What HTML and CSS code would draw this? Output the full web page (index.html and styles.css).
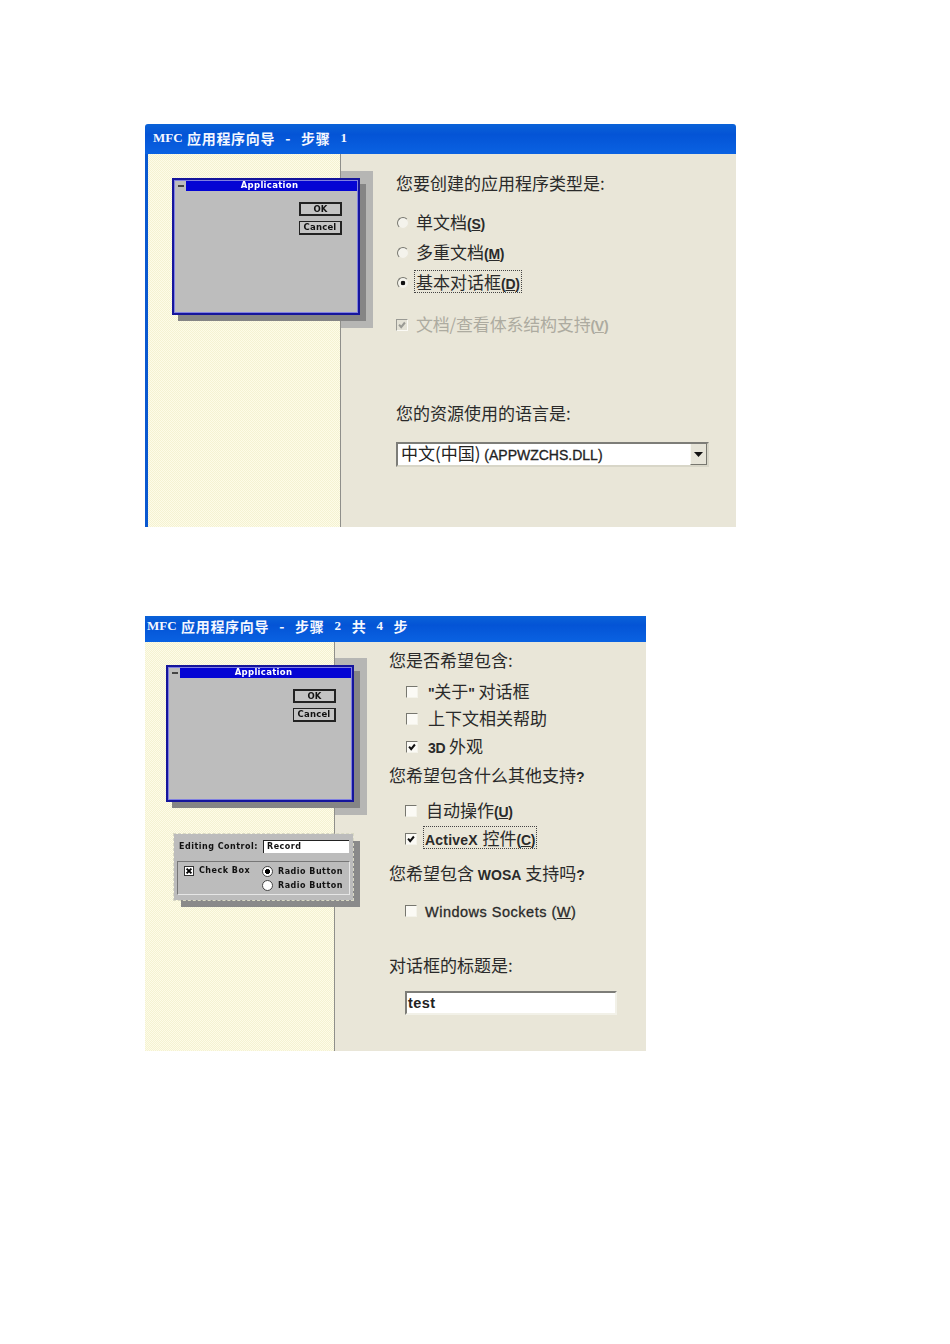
FILE: index.html
```html
<!DOCTYPE html>
<html lang="zh-CN">
<head>
<meta charset="utf-8">
<title>MFC 应用程序向导</title>
<link rel="stylesheet" href="styles.css">
</head>
<body>
<section class="wizard wizard-one">
  <header class="titlebar">
    <span class="mfc">MFC</span><span>应用程序向导</span><span>-</span><span>步骤</span><span class="num">1</span>
  </header>
  <div class="wizard-body">
    <aside class="art">
      <div class="preview">
        <div class="dialog">
          <div class="dialog-title"><i class="sysbox"></i><span>Application</span></div>
          <div class="dialog-buttons"><span class="btn btn-default">OK</span><span class="btn">Cancel</span></div>
        </div>
      </div>
    </aside>
    <main class="pane">
      <h2 class="heading">您要创建的应用程序类型是:</h2>
      <div class="options radios">
        <div class="row"><i class="radio"></i><span>单文档<b>(<u>S</u>)</b></span></div>
        <div class="row"><i class="radio"></i><span>多重文档<b>(<u>M</u>)</b></span></div>
        <div class="row"><i class="radio on"></i><span class="focus">基本对话框<b>(<u>D</u>)</b></span></div>
      </div>
      <div class="row row-disabled">
        <i class="check disabled"><svg viewBox="0 0 12 12"><path d="M2.500 5.500 5 8.500 9.500 3" fill="none" stroke="#9a9a94" stroke-width="2.400"/></svg></i>
        <span>文档/查看体系结构支持<b>(<u>V</u>)</b></span>
      </div>
      <h2 class="heading h-lang">您的资源使用的语言是:</h2>
      <div class="select">
        <span class="select-text">中文(中国) <b>(APPWZCHS.DLL)</b></span>
        <span class="select-arrow"><svg viewBox="0 0 9 5" width="9" height="5"><path d="M0 0h9L4.500 5z" fill="#111"/></svg></span>
      </div>
    </main>
  </div>
</section>

<section class="wizard wizard-two">
  <header class="titlebar">
    <span class="mfc">MFC</span><span>应用程序向导</span><span>-</span><span>步骤</span><span class="num">2</span><span>共</span><span class="num">4</span><span>步</span>
  </header>
  <div class="wizard-body">
    <aside class="art">
      <div class="preview">
        <div class="dialog">
          <div class="dialog-title"><i class="sysbox"></i><span>Application</span></div>
          <div class="dialog-buttons"><span class="btn btn-default">OK</span><span class="btn">Cancel</span></div>
        </div>
      </div>
      <div class="controls">
        <div class="controls-top"><span>Editing Control:</span><span class="mini-input">Record</span></div>
        <div class="controls-group">
          <div class="mini-check">
            <i class="mini-box"><svg viewBox="0 0 10 10"><path d="M2 2 8 8M8 2 2 8" stroke="#000" stroke-width="2.400"/></svg></i>
            <span>Check Box</span>
          </div>
          <div class="mini-radios">
            <div class="mini-radio"><i class="mini-dot on"></i><span>Radio Button</span></div>
            <div class="mini-radio"><i class="mini-dot"></i><span>Radio Button</span></div>
          </div>
        </div>
      </div>
    </aside>
    <main class="pane">
      <h2 class="heading">您是否希望包含:</h2>
      <div class="options group-a">
        <div class="row"><i class="check"></i><span><b>"</b>关于<b>"</b> 对话框</span></div>
        <div class="row"><i class="check"></i><span>上下文相关帮助</span></div>
        <div class="row"><i class="check"><svg viewBox="0 0 12 12"><path d="M2.500 5.500 5 8.500 9.500 3" fill="none" stroke="#111" stroke-width="2.400"/></svg></i><span><b>3D</b> 外观</span></div>
      </div>
      <h2 class="heading h-other">您希望包含什么其他支持<b>?</b></h2>
      <div class="options group-b">
        <div class="row"><i class="check"></i><span>自动操作<b>(<u>U</u>)</b></span></div>
        <div class="row"><i class="check"><svg viewBox="0 0 12 12"><path d="M2.500 5.500 5 8.500 9.500 3" fill="none" stroke="#111" stroke-width="2.400"/></svg></i><span class="focus focus-activex"><b>ActiveX</b> 控件<b>(<u>C</u>)</b></span></div>
      </div>
      <h2 class="heading h-wosa">您希望包含 <b>WOSA</b> 支持吗<b>?</b></h2>
      <div class="options group-c">
        <div class="row"><i class="check"></i><span class="sockets"><b>Windows Sockets (<u>W</u>)</b></span></div>
      </div>
      <h2 class="heading h-title">对话框的标题是:</h2>
      <div class="textbox">test</div>
    </main>
  </div>
</section>
</body>
</html>
```
FILE: styles.css
```css
* { box-sizing: border-box; }
html, body { margin: 0; padding: 0; background: #fff; }
body {
  height: 1344px;
  overflow: hidden;
  padding-left: 145px;
  font-family: "Noto Sans CJK SC", "Liberation Sans", sans-serif;
}
.wizard {
  display: flex;
  flex-direction: column;
  filter: blur(0.35px);
}
.wizard-one { width: 591px; height: 403px; margin-top: 124px; }
.wizard-two { width: 501px; height: 435px; margin-top: 89px; }

.titlebar {
  display: flex;
  align-items: center;
  gap: 10px;
  flex: none;
  color: #f4f7ff;
  font-size: 14px;
  line-height: 18px;
  font-weight: 700;
  letter-spacing: 0.7px;
  background: linear-gradient(180deg, #0a62d8 0%, #0454d6 35%, #0a62e2 100%);
}
.wizard-one .titlebar { height: 30px; padding: 0 0 2px 8px; border-radius: 3px 3px 0 0; }
.wizard-two .titlebar { height: 26px; padding: 0 0 6px 2px; }
.mfc {
  width: 25px;
  margin-right: -1px;
  font-family: "Liberation Serif", serif;
  font-weight: 700;
  font-size: 13px;
  letter-spacing: 0;
}
.num { font-family: "Liberation Serif", serif; font-size: 13px; }

.wizard-body { display: flex; flex: 1; min-height: 0; }
.wizard-one .wizard-body { border-left: 3px solid #0a58d0; }

.art {
  flex: none;
  display: flex;
  flex-direction: column;
  align-items: flex-start;
  border-right: 1px solid #8f8f8a;
  background: repeating-conic-gradient(#fefce8 0 25%, #f4f2d2 0 50%) 0 0 / 2px 2px;
}
.wizard-one .art { width: 193px; padding: 24px 0 0 24px; }
.wizard-two .art { width: 190px; padding: 23px 0 0 21px; }

.preview { position: relative; flex: none; width: 188px; height: 137px; }
.preview::before {
  content: "";
  position: absolute;
  left: 169px;
  top: -7px;
  right: -13px;
  bottom: -13px;
  background: #b6b6b4;
}
.dialog {
  position: relative;
  display: flex;
  flex-direction: column;
  height: 100%;
  background: #bdbdbd;
  border: 2px solid #15159c;
  box-shadow: inset 0 0 0 1px #8080e0, 6px 6px 0 #858585;
  padding: 1px;
}
.dialog-title {
  position: relative;
  display: flex;
  justify-content: center;
  height: 10px;
  flex: none;
  background: #0404d4;
  color: #fff;
  font: 700 8.500px/9px "DejaVu Sans", sans-serif;
  letter-spacing: 0.3px;
}
.dialog-title span { margin-left: 7px; }
.sysbox {
  position: absolute;
  left: 0;
  top: 0;
  width: 11px;
  height: 10px;
  background: linear-gradient(#bdbdbd 42%, #444 42% 58%, #bdbdbd 58%) center / 6px 100% no-repeat #bdbdbd;
}
.dialog-buttons {
  display: flex;
  flex-direction: column;
  align-self: flex-end;
  gap: 5px;
  margin: 11px 15px 0 0;
}
.btn {
  display: block;
  width: 43px;
  height: 14px;
  background: #c4c4c4;
  border: 1px solid #222;
  border-right-width: 2px;
  border-bottom-width: 2px;
  color: #111;
  text-align: center;
  font: 700 8.500px/11px "DejaVu Sans", sans-serif;
  letter-spacing: 0.2px;
}
.btn-default { border-width: 2px; line-height: 10px; }

.controls {
  position: relative;
  flex: none;
  width: 179px;
  height: 66px;
  margin: 32px 0 0 8px;
  padding: 5px 3px 0;
  background: #bcbcbc;
  outline: 1px dashed #d8d8c4;
  box-shadow: 7px 7px 0 #8a8a8a;
  color: #111;
  font: 700 8px/10px "DejaVu Sans", sans-serif;
  letter-spacing: 0.5px;
}
.controls-top { display: flex; align-items: center; gap: 5px; padding-left: 2px; height: 15px; }
.mini-input {
  width: 86px;
  height: 13px;
  padding-left: 3px;
  background: #fff;
  border-left: 1px solid #222;
  border-top: 1px solid #222;
  line-height: 11px;
}
.controls-group {
  display: flex;
  gap: 11px;
  height: 34px;
  margin-top: 7px;
  padding: 4px 0 0 6px;
  border: 1px solid #e6e6e6;
  border-top-color: #777;
  border-left-color: #777;
}
.mini-check { display: flex; align-items: flex-start; gap: 5px; width: 67px; }
.mini-box { display: block; flex: none; width: 10px; height: 10px; background: #fff; border: 1px solid #333; }
.mini-box svg { display: block; width: 100%; height: 100%; }
.mini-radios { display: flex; flex-direction: column; gap: 3px; }
.mini-radio { display: flex; align-items: center; gap: 5px; height: 11px; }
.mini-dot {
  display: block;
  flex: none;
  width: 11px;
  height: 11px;
  border-radius: 50%;
  background: #fff;
  border: 1px solid #444;
}
.mini-dot.on { background: radial-gradient(circle, #000 0 2.400px, #fff 2.800px); }

.pane {
  flex: 1;
  min-width: 0;
  display: flex;
  flex-direction: column;
  align-items: flex-start;
  background: #e9e6d8;
  color: #2a2a2a;
}
.wizard-one .pane { padding: 19px 0 0 55px; }
.wizard-two .pane { padding: 8px 0 0 54px; }

.heading { flex: none; height: 20px; margin: 0; font-size: 17px; line-height: 20px; font-weight: 400; white-space: nowrap; }
.h-lang { margin-top: 63px; }
.h-other { margin-top: 4px; }
.h-wosa { margin-top: 10px; }
.h-title { margin-top: 30px; }

b { font-family: "Liberation Sans", sans-serif; font-size: 14px; font-weight: 700; }
.row b { letter-spacing: -0.3px; }

.options { display: flex; flex-direction: column; flex: none; }
.row { display: flex; align-items: center; flex: none; white-space: nowrap; font-size: 17px; height: 30px; }
.row > span { line-height: 21px; height: 21px; margin-bottom: 4px; }
.group-a .row > span, .group-b .row > span, .group-c .row > span { margin-bottom: 3px; }
.radios { margin: 15px 0 0 1px; }
.radios .row { gap: 7px; }
.row-disabled { margin-top: 12px; gap: 8px; color: #adaba0; letter-spacing: -0.2px; }
.group-a { margin: 8px 0 0 17px; }
.group-a .row { height: 27.500px; gap: 10px; }
.group-b { margin: 12px 0 0 16px; }
.group-b .row { height: 28px; gap: 9px; }
.group-c { margin: 14px 0 0 16px; }
.group-c .row { height: 28px; gap: 8px; }

.radio {
  display: block;
  flex: none;
  width: 12px;
  height: 12px;
  border-radius: 50%;
  background: #f4f3ec;
  border: 1px solid #e9e6d8;
  border-top-color: #77776f;
  border-left-color: #77776f;
}
.radio.on { background: radial-gradient(circle, #111 0 2px, #f4f3ec 2.600px); }
.check {
  display: block;
  flex: none;
  width: 12px;
  height: 12px;
  background: #fbfaf5;
  border: 1px solid #f4f3ea;
  border-top-color: #77776f;
  border-left-color: #77776f;
}
.check svg { display: block; width: 10px; height: 10px; }
.check.disabled { background: #e4e2d6; border-color: #9a9a94 #fbfaf5 #fbfaf5 #9a9a94; }

.focus { outline: 1px dotted #444; margin-left: -1px; padding: 0 1px; }
.group-b .focus-activex { margin-left: -2px; }
.group-b .focus-activex b:first-child { letter-spacing: 0.2px; margin-right: 1px; }
.sockets b { font-size: 14.500px; letter-spacing: 0.5px; font-weight: 400; -webkit-text-stroke: 0.3px #2a2a2a; }

.select {
  display: flex;
  align-items: center;
  justify-content: space-between;
  flex: none;
  width: 313px;
  height: 25px;
  margin-top: 19px;
  padding-left: 3px;
  background: #fff;
  border: 2px solid #d8d6c8;
  border-top-color: #7d7d78;
  border-left-color: #7d7d78;
  font-size: 17px;
  color: #222;
  white-space: nowrap;
}
.select-text { line-height: 20px; height: 20px; margin-bottom: 4px; }
.select-text b { font-weight: 400; -webkit-text-stroke: 0.3px #222; }
.select-arrow {
  display: flex;
  align-items: center;
  justify-content: center;
  width: 17px;
  height: 100%;
  background: #e6e4d8;
  border-left: 1px solid #f8f8f2;
  border-right: 1px solid #77776f;
  border-bottom: 1px solid #77776f;
}
.textbox {
  flex: none;
  width: 212px;
  height: 24px;
  margin: 16px 0 0 16px;
  padding-left: 1px;
  background: #fff;
  border: 2px solid #f2f1e8;
  border-top-color: #7d7d78;
  border-left-color: #7d7d78;
  font: 700 14.500px/20px "Liberation Sans", sans-serif;
  letter-spacing: 0.4px;
  color: #222;
}
```
